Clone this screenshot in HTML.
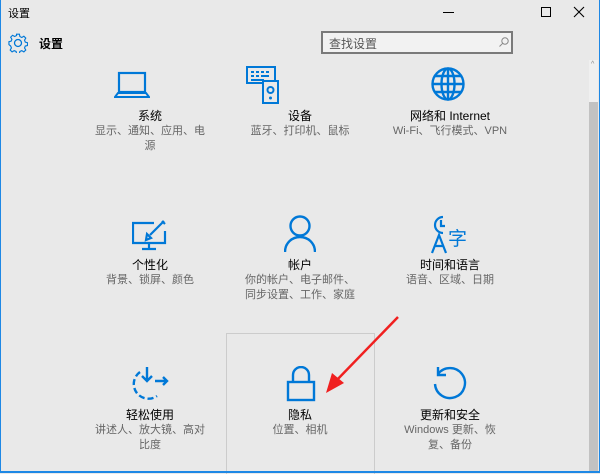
<!DOCTYPE html><html><head><meta charset="utf-8"><style>
*{margin:0;padding:0;box-sizing:border-box}
body{width:600px;height:473px;overflow:hidden;background:#e9e9e9;font-family:"Liberation Sans","Noto Sans CJK SC",sans-serif;position:relative;color:#000}
.a{position:absolute}
.it{position:absolute;width:150px;text-align:center;white-space:nowrap}
.t{font-size:12px;line-height:15px}
.d{font-size:11px;line-height:15px;color:#666}
svg{position:absolute}
</style></head><body>
<div class="a" style="left:0;top:0;width:600px;height:473px;border:1px solid #1e88e5;border-top:none"></div>
<div class="a" style="left:8px;top:5px;font-size:11px">设置</div>
<div class="a" style="left:443px;top:12px;width:11px;height:1px;background:#000"></div>
<div class="a" style="left:541px;top:7px;width:10px;height:10px;border:1px solid #000"></div>
<svg style="left:573px;top:6px" width="12" height="12"><path d="M1 1l10 10M11 1L1 11" stroke="#000" stroke-width="1.1"/></svg>
<svg style="left:8px;top:33px" width="20" height="20" viewBox="0 0 20 20"><circle cx="10" cy="10" r="3.5" fill="none" stroke="#0078d7" stroke-width="1.3"/><path d="M8.5 1.5h3l.5 2.5 2 1 2.2-1.3 2 2L16.9 7.9l.8 2 2.3.6v3l-2.3.5-.8 2 1.3 2.2-2 2-2.2-1.3-2 .8-.5 2.3h-3l-.5-2.3-2-.8-2.2 1.3-2-2 1.3-2.2-.8-2L.5 12.5v-3l2.3-.6.8-2L2.3 4.7l2-2L6.5 4l2-1z" fill="none" stroke="#0078d7" stroke-width="1.2" transform="scale(.95) translate(.5 -.3)"/></svg>
<div class="a" style="left:39px;top:35px;font-size:12px;font-weight:bold">设置</div>
<div class="a" style="left:321px;top:31px;width:192px;height:23px;border:2px solid #7a7a7a;background:#f2f2f2;font-size:12px;color:#555;padding:2px 6px">查找设置</div>
<svg style="left:498px;top:36px" width="12" height="12"><circle cx="7" cy="5" r="3.2" fill="none" stroke="#888"/><path d="M4.7 7.3L1.5 10.5" stroke="#888"/></svg>
<div class="a" style="left:589px;top:60px;width:9px;height:42px;background:#f0f0f0"></div>
<div class="a" style="left:591px;top:61px;font-size:7px;color:#888">^</div>
<div class="a" style="left:589px;top:102px;width:9px;height:371px;background:#c2c2c2"></div>
<div class="a" style="left:226px;top:333px;width:149px;height:141px;border:1px solid #ccc;border-bottom:none"></div>
<div class="a" style="left:0;top:471px;width:600px;height:2px;background:#1e88e5"></div>
<svg style="left:114px;top:70px" width="36" height="30"><rect x="5" y="3" width="26" height="19" fill="none" stroke="#0078d7" stroke-width="2.2"/><path d="M1 27h34l-3-4H4z" fill="none" stroke="#0078d7" stroke-width="2"/></svg>
<svg style="left:246px;top:66px" width="34" height="38"><rect x="1" y="1" width="28" height="16" fill="none" stroke="#0078d7" stroke-width="2"/><path d="M5 6h3M10 6h3M15 6h3M20 6h3M5 10h3M10 10h3M15 10h8M5 14h13" stroke="#0078d7" stroke-width="2"/><rect x="17" y="15" width="15" height="22" fill="#e9e9e9" stroke="#0078d7" stroke-width="2"/><circle cx="24.5" cy="24" r="3" fill="none" stroke="#0078d7" stroke-width="2"/><circle cx="24.5" cy="32" r="1.5" fill="#0078d7"/></svg>
<svg style="left:430px;top:66px" width="36" height="36"><g fill="none" stroke="#0078d7" stroke-width="2.4"><circle cx="18" cy="18" r="15.5"/><ellipse cx="18" cy="18" rx="6.5" ry="15.5"/><path d="M18 2.5v31M2.5 18h31M5 10h26M5 26h26"/></g></svg>
<svg style="left:132px;top:219px" width="36" height="34"><g fill="none" stroke="#0078d7" stroke-width="2.2"><path d="M22 4H1v20h32V12"/><path d="M17 24v5M10 30h14"/><path d="M32 2l-14 14M30 2l3 3M15 15l4 4-5 2z"/></g></svg>
<svg style="left:284px;top:215px" width="32" height="38"><g fill="none" stroke="#0078d7" stroke-width="2.4"><circle cx="16" cy="11" r="9.5"/><path d="M1 37c0-9 7-15 15-15s15 6 15 15"/></g></svg>
<svg style="left:430px;top:214px" width="40" height="40"><g fill="none" stroke="#0078d7" stroke-width="2.2"><path d="M13 3a8 8 0 1 0 0 16" /><path d="M11 6v6h4"/><path d="M2 39l7-18 7 18M5 32h8"/></g><text x="18" y="31" font-size="19" fill="#0078d7" font-family="Noto Sans CJK SC">字</text></svg>
<svg style="left:131px;top:366px" width="38" height="34"><g fill="none" stroke="#0078d7" stroke-width="2.4"><path d="M9 6A14 14 0 0 0 26 30" stroke-dasharray="6 3"/><path d="M16 1v14M11 10l5 5 5-5M24 15h12M32 11l4 4-4 4"/></g></svg>
<svg style="left:286px;top:366px" width="30" height="36"><g fill="none" stroke="#0078d7" stroke-width="2.4"><path d="M7 16V9a8 8 0 0 1 16 0v7"/><rect x="2" y="16" width="26" height="18"/></g></svg>
<svg style="left:431px;top:365px" width="38" height="38"><g fill="none" stroke="#0078d7" stroke-width="2.4"><path d="M7 9A15 15 0 1 1 4 19"/><path d="M7 2v8h8"/></g></svg>
<svg style="left:320px;top:315px" width="80" height="80"><path d="M78 2L14 68" stroke="#f02020" stroke-width="2.5"/><path d="M6 78l6-20 12 10z" fill="#f02020"/></svg>
<div class="it" style="left:75px;top:109px"><div class="t">系统</div><div class="d">显示、通知、应用、电<br>源</div></div>
<div class="it" style="left:225px;top:109px"><div class="t">设备</div><div class="d">蓝牙、打印机、鼠标</div></div>
<div class="it" style="left:375px;top:109px"><div class="t">网络和 Internet</div><div class="d">Wi-Fi、飞行模式、VPN</div></div>
<div class="it" style="left:75px;top:258px"><div class="t">个性化</div><div class="d">背景、锁屏、颜色</div></div>
<div class="it" style="left:225px;top:258px"><div class="t">帐户</div><div class="d">你的帐户、电子邮件、<br>同步设置、工作、家庭</div></div>
<div class="it" style="left:375px;top:258px"><div class="t">时间和语言</div><div class="d">语音、区域、日期</div></div>
<div class="it" style="left:75px;top:408px"><div class="t">轻松使用</div><div class="d">讲述人、放大镜、高对<br>比度</div></div>
<div class="it" style="left:225px;top:408px"><div class="t">隐私</div><div class="d">位置、相机</div></div>
<div class="it" style="left:375px;top:408px"><div class="t">更新和安全</div><div class="d">Windows 更新、恢<br>复、备份</div></div>
</body></html>
